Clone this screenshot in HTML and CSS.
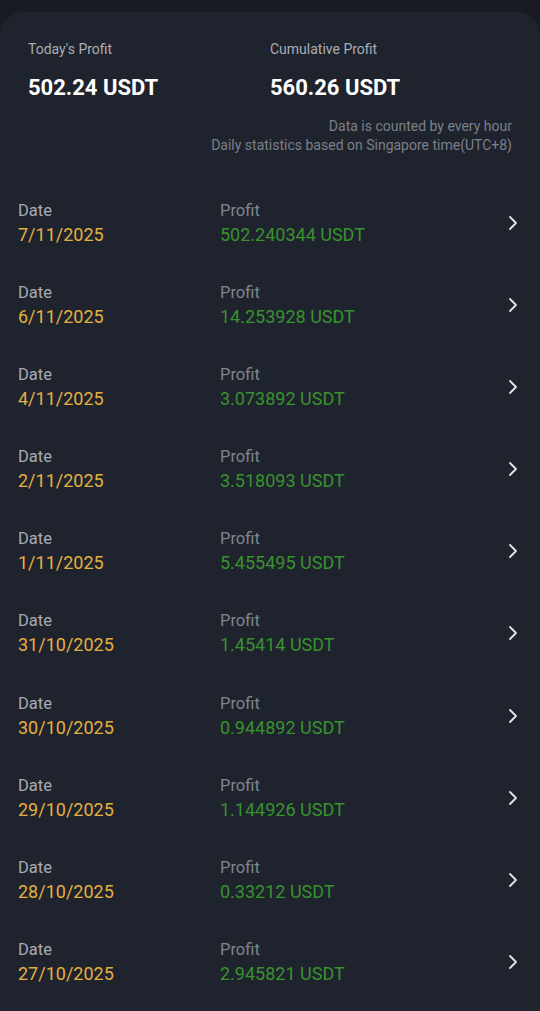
FILE: index.html
```html
<!DOCTYPE html>
<html lang="en">
<head>
  <meta charset="UTF-8" />
  <meta name="viewport" content="width=device-width, initial-scale=1.0"/>
  <title>Profit History</title>
  <link rel="stylesheet" href="styles.css">
</head>
<body>
  <div class="card">
    <!-- Summary -->
    <section class="summary">
      <div class="summary-grid">
        <div class="stat">
          <div class="stat-label">Today's Profit</div>
          <div class="stat-value">502.24 USDT</div>
        </div>
        <div class="stat">
          <div class="stat-label">Cumulative Profit</div>
          <div class="stat-value">560.26 USDT</div>
        </div>
      </div>
      <div class="notes">
        <p>Data is counted by every hour</p>
        <p>Daily statistics based on Singapore time(UTC+8)</p>
      </div>
    </section>

    <!-- Daily rows -->
    <ul class="rows">
      <li class="row">
        <div class="col date"><span class="label">Date</span><span class="value">7/11/2025</span></div>
        <div class="col profit"><span class="label">Profit</span><span class="value">502.240344 USDT</span></div>
        <svg class="chev" viewBox="0 0 10 16"><path d="M2 2l6 6-6 6"/></svg>
      </li>
      <li class="row">
        <div class="col date"><span class="label">Date</span><span class="value">6/11/2025</span></div>
        <div class="col profit"><span class="label">Profit</span><span class="value">14.253928 USDT</span></div>
        <svg class="chev" viewBox="0 0 10 16"><path d="M2 2l6 6-6 6"/></svg>
      </li>
      <li class="row">
        <div class="col date"><span class="label">Date</span><span class="value">4/11/2025</span></div>
        <div class="col profit"><span class="label">Profit</span><span class="value">3.073892 USDT</span></div>
        <svg class="chev" viewBox="0 0 10 16"><path d="M2 2l6 6-6 6"/></svg>
      </li>
      <li class="row">
        <div class="col date"><span class="label">Date</span><span class="value">2/11/2025</span></div>
        <div class="col profit"><span class="label">Profit</span><span class="value">3.518093 USDT</span></div>
        <svg class="chev" viewBox="0 0 10 16"><path d="M2 2l6 6-6 6"/></svg>
      </li>
      <li class="row">
        <div class="col date"><span class="label">Date</span><span class="value">1/11/2025</span></div>
        <div class="col profit"><span class="label">Profit</span><span class="value">5.455495 USDT</span></div>
        <svg class="chev" viewBox="0 0 10 16"><path d="M2 2l6 6-6 6"/></svg>
      </li>
      <li class="row">
        <div class="col date"><span class="label">Date</span><span class="value">31/10/2025</span></div>
        <div class="col profit"><span class="label">Profit</span><span class="value">1.45414 USDT</span></div>
        <svg class="chev" viewBox="0 0 10 16"><path d="M2 2l6 6-6 6"/></svg>
      </li>
      <li class="row">
        <div class="col date"><span class="label">Date</span><span class="value">30/10/2025</span></div>
        <div class="col profit"><span class="label">Profit</span><span class="value">0.944892 USDT</span></div>
        <svg class="chev" viewBox="0 0 10 16"><path d="M2 2l6 6-6 6"/></svg>
      </li>
      <li class="row">
        <div class="col date"><span class="label">Date</span><span class="value">29/10/2025</span></div>
        <div class="col profit"><span class="label">Profit</span><span class="value">1.144926 USDT</span></div>
        <svg class="chev" viewBox="0 0 10 16"><path d="M2 2l6 6-6 6"/></svg>
      </li>
      <li class="row">
        <div class="col date"><span class="label">Date</span><span class="value">28/10/2025</span></div>
        <div class="col profit"><span class="label">Profit</span><span class="value">0.33212 USDT</span></div>
        <svg class="chev" viewBox="0 0 10 16"><path d="M2 2l6 6-6 6"/></svg>
      </li>
      <li class="row">
        <div class="col date"><span class="label">Date</span><span class="value">27/10/2025</span></div>
        <div class="col profit"><span class="label">Profit</span><span class="value">2.945821 USDT</span></div>
        <svg class="chev" viewBox="0 0 10 16"><path d="M2 2l6 6-6 6"/></svg>
      </li>
    </ul>
  </div>
</body>
</html>
```

FILE: styles.css
```css
body {
  margin: 0;
  background: #181b21;
  font-family: Roboto, 'Liberation Sans', sans-serif;
  color: #fff;
}

/* Card */
.card {
  margin-top: 12px;
  background: #1f232d;
  border-radius: 24px 24px 0 0;
  min-height: 999px;
}

/* Summary */
.summary {
  padding: 28px 28px 27px;
}

.summary-grid {
  display: grid;
  grid-template-columns: 1fr 1fr;
}

.stat-label {
  font-size: 14px;
  line-height: 18px;
  color: #a9adb5;
}

.stat-value {
  margin-top: 17px;
  font-size: 22px;
  line-height: 26px;
  font-weight: 700;
  color: #fff;
}

.notes {
  margin-top: 16px;
  text-align: right;
}

.notes p {
  margin: 0;
  font-size: 14px;
  line-height: 19px;
  color: #7b8089;
}

/* Rows */
.rows {
  list-style: none;
  margin: 0;
  padding: 0;
}

.row {
  display: flex;
  align-items: center;
  padding: 16.5px 22px 17.7px 18px;
}

.col {
  display: flex;
  flex-direction: column;
}

.col.date {
  width: 202px;
}

.col.profit {
  flex: 1;
}

.label {
  font-size: 16.5px;
  line-height: 24px;
}

.date .label {
  color: #a7abb4;
}

.profit .label {
  color: #80858e;
}

.value {
  font-size: 18px;
  line-height: 24px;
}

.date .value {
  color: #e3b040;
}

.profit .value {
  color: #38922f;
}

.chev {
  width: 10px;
  height: 16px;
  fill: none;
  stroke: #e2e4e8;
  stroke-width: 1.8;
  stroke-linecap: round;
  stroke-linejoin: round;
}
```
